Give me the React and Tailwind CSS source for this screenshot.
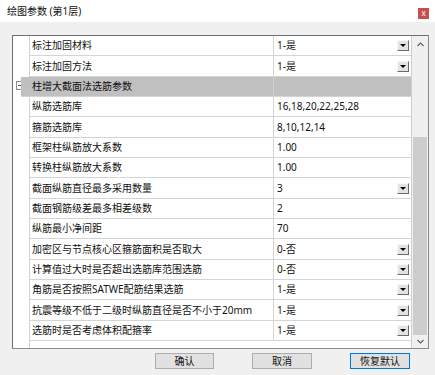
import React from "react";

const rows = [
  { name: "标注加固材料", value: "1-是", dd: true },
  { name: "标注加固方法", value: "1-是", dd: true },
  { header: true, name: "柱增大截面法选筋参数" },
  { name: "纵筋选筋库", value: "16,18,20,22,25,28" },
  { name: "箍筋选筋库", value: "8,10,12,14" },
  { name: "框架柱纵筋放大系数", value: "1.00" },
  { name: "转换柱纵筋放大系数", value: "1.00" },
  { name: "截面纵筋直径最多采用数量", value: "3", dd: true },
  { name: "截面钢筋级差最多相差级数", value: "2" },
  { name: "纵筋最小净间距", value: "70" },
  { name: "加密区与节点核心区箍筋面积是否取大", value: "0-否", dd: true },
  { name: "计算值过大时是否超出选筋库范围选筋", value: "0-否", dd: true },
  { name: "角筋是否按照SATWE配筋结果选筋", value: "1-是", dd: true },
  { name: "抗震等级不低于二级时纵筋直径是否不小于20mm", value: "1-是", dd: true },
  { name: "选筋时是否考虑体积配箍率", value: "1-是", dd: true },
];

function DropBtn() {
  return (
    <div className="ml-auto mr-[2px] w-[12px] h-[11px] bg-[#e3e3e3] border-t border-l border-t-[#f8f8f8] border-l-[#f8f8f8] border-r border-b border-r-[#6a6a6a] border-b-[#6a6a6a] flex items-center justify-center">
      <div className="w-0 h-0 border-l-[3px] border-r-[3px] border-t-[3px] border-l-transparent border-r-transparent border-t-black" />
    </div>
  );
}

function Row({ r }) {
  if (r.header) {
    return (
      <div className="h-[20.35px] -ml-[9px] bg-[#c0c0c0] flex border-b border-[#d4d4d4]">
        <div className="w-[252px] pl-[11px] flex items-center">{r.name}</div>
        <div className="flex-1 border-l border-[#d0d0d0]" />
      </div>
    );
  }
  return (
    <div className="h-[20.35px] flex border-b border-[#d4d4d4]">
      <div className="w-[243px] pl-[2px] flex items-center whitespace-nowrap overflow-hidden">{r.name}</div>
      <div className="flex-1 border-l border-[#d4d4d4] pl-[3px] flex items-center">
        <span>{r.value}</span>
        {r.dd && <DropBtn />}
      </div>
    </div>
  );
}

export default function App() {
  return (
    <div className="w-[435px] h-[375px] bg-[#f0f0f0] overflow-hidden text-[10px] text-[#111] font-['Noto_Sans','Noto_Sans_CJK_SC',sans-serif]">
      <div className="h-[22px] bg-white flex items-center">
        <span className="pl-[7px] text-[10px]">绘图参数 (第1层)</span>
        <div className="ml-auto mr-[6px] self-start mt-[8px] w-[11px] h-[11px] bg-[#c94f4f] flex items-center justify-center text-white text-[8px] leading-none pb-[1px]">x</div>
      </div>
      <div className="mt-[13px] ml-[12px] w-[417px] h-[314px] border border-[#8a8a8a] border-t-[#6e6e6e] border-l-[#6e6e6e] bg-white flex">
        <div className="w-[16px] bg-white flex flex-col">
          <div className="mt-[45px] ml-[3px] w-[9px] h-[9px] border border-[#8c8c8c] flex items-center justify-center">
            <div className="w-[5px] h-px bg-[#555]" />
          </div>
        </div>
        <div className="w-[382px] border-l border-[#d4d4d4] flex flex-col">
          {rows.map((r, i) => (
            <Row key={i} r={r} />
          ))}
        </div>
        <div className="flex-1 border-l border-[#cfcfcf] bg-[#f0f0f0] flex flex-col items-stretch">
          <div className="h-[16px] flex items-center justify-center">
            <svg width="7" height="5" viewBox="0 0 7 5">
              <path d="M0.5 4 L3.5 1 L6.5 4" fill="none" stroke="#606060" strokeWidth="1.2" />
            </svg>
          </div>
          <div className="mt-[85px] mx-[1px] h-[198px] bg-[#cdcdcd]" />
          <div className="h-[12px] flex items-center justify-center">
            <svg width="7" height="5" viewBox="0 0 7 5">
              <path d="M0.5 1 L3.5 4 L6.5 1" fill="none" stroke="#606060" strokeWidth="1.2" />
            </svg>
          </div>
        </div>
      </div>
      <div className="mt-[4px] flex">
        <div className="ml-[155px] w-[59px] h-[16px] bg-[#e1e1e1] border border-[#adadad] flex items-center justify-center">确认</div>
        <div className="ml-[38px] w-[60px] h-[16px] bg-[#e1e1e1] border border-[#adadad] flex items-center justify-center">取消</div>
        <div className="ml-[38px] w-[60px] h-[16px] bg-[#e1e1e1] border border-[#0078d7] flex items-center justify-center">恢复默认</div>
      </div>
    </div>
  );
}
